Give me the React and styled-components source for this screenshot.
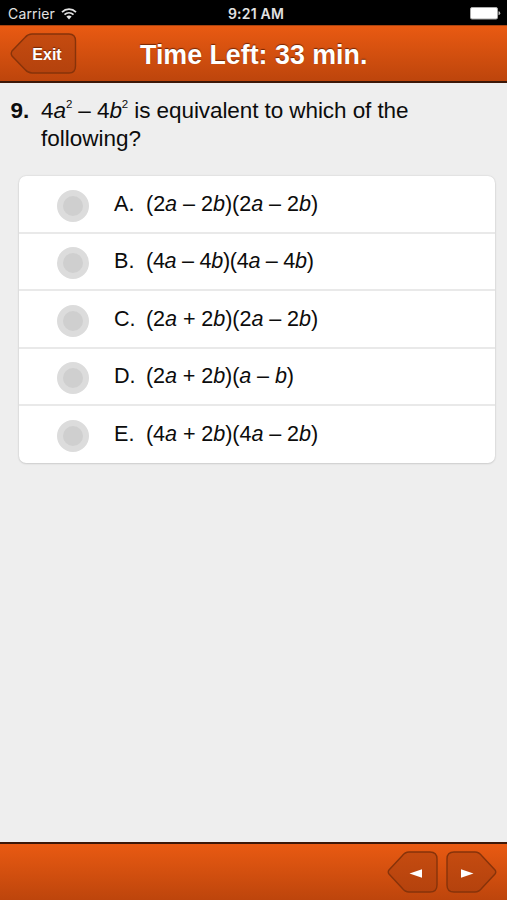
import React, { useState } from 'react';
import styled, { createGlobalStyle } from 'styled-components';

const answers = [
	{ letter: 'A.', terms: ['(2', 'a', ' – 2', 'b', ')(2', 'a', ' – 2', 'b', ')'], spacing: '-0.05px' },
	{ letter: 'B.', terms: ['(4', 'a', ' – 4', 'b', ')(4', 'a', ' – 4', 'b', ')'], spacing: '-0.3px' },
	{ letter: 'C.', terms: ['(2', 'a', ' + 2', 'b', ')(2', 'a', ' – 2', 'b', ')'], spacing: '-0.08px' },
	{ letter: 'D.', terms: ['(2', 'a', ' + 2', 'b', ')(', 'a', ' – ', 'b', ')'], spacing: '-0.1px' },
	{ letter: 'E.', terms: ['(4', 'a', ' + 2', 'b', ')(4', 'a', ' – 2', 'b', ')'], spacing: '-0.08px' },
];

// The terms alternate between upright text and italic variables
const Expression = ({ terms }) =>
	terms.map((term, index) =>
		index % 2 ? <i key={index}>{term}</i> : <span key={index}>{term}</span>
	);

const WifiIcon = () => (
	<svg width='16' height='12' viewBox='0 0 16 12'>
		<path d='M1 4.1C5 .2 11 .2 15 4.1' fill='none' stroke='#e2e2e2' strokeWidth='1.8' />
		<path d='M3.5 6.7C6.1 4.2 9.9 4.2 12.5 6.7' fill='none' stroke='#e2e2e2' strokeWidth='1.7' />
		<path d='M5.4 8.6Q8 6.4 10.6 8.6L8 11.4Z' fill='#e2e2e2' />
	</svg>
);

const BatteryIcon = () => (
	<svg width='31' height='13' viewBox='0 0 31 13'>
		<rect x='.5' y='.5' width='27' height='11.5' rx='1.5' fill='#fff' stroke='#aaa' />
		<path d='M28.5 4.3Q30.3 4.5 30.3 6.3Q30.3 8 28.5 8.3Z' fill='#bbb' />
	</svg>
);

const App = () => {
	const [selected, setSelected] = useState(null);

	return (
		<Screen>
			<GlobalStyle />
			<StatusBar>
				<Carrier>
					Carrier <WifiIcon />
				</Carrier>
				<Clock>9:21 AM</Clock>
				<Battery>
					<BatteryIcon />
				</Battery>
			</StatusBar>
			<Header>
				<ExitButton>
					<svg width='67' height='42' viewBox='0 0 67 42'>
						<defs>
							<linearGradient id='buttonShade' x1='0' y1='0' x2='0' y2='1'>
								<stop offset='0' stopColor='#c54b10' />
								<stop offset='1' stopColor='#b4420d' />
							</linearGradient>
						</defs>
						<path
							d='M22 1H59Q65.5 1 65.5 8V33Q65.5 40 59 40H22Q18 40 15 36.5L2 23Q.5 20.5 2 18L15 4.5Q18 1 22 1Z'
							fill='url(#buttonShade)'
							stroke='#87330a'
							strokeWidth='1.4'
						/>
					</svg>
					<ExitLabel>Exit</ExitLabel>
				</ExitButton>
				<Title>Time Left: 33 min.</Title>
			</Header>
			<Content>
				<Question>
					<QuestionNumber>9.</QuestionNumber>
					<QuestionText>
						4<i>a</i>
						<Power>2</Power> – 4<i>b</i>
						<Power>2</Power> is equivalent to which of the
						<br />
						<LastLine>following?</LastLine>
					</QuestionText>
				</Question>
				<AnswerList>
					{answers.map(({ letter, terms, spacing }) => (
						<Answer key={letter} onClick={() => setSelected(letter)}>
							<Radio $selected={selected === letter} />
							<Letter>{letter}</Letter>
							<Formula $spacing={spacing}>
								<Expression terms={terms} />
							</Formula>
						</Answer>
					))}
				</AnswerList>
			</Content>
			<Footer>
				<ArrowButton aria-label='Previous question'>
					<svg width='51' height='42' viewBox='0 0 51 42'>
						<path
							d='M22 1H43Q50 1 50 8V34Q50 41 43 41H22Q18 41 15 37L2 23Q.5 21 2 19L15 5Q18 1 22 1Z'
							fill='url(#buttonShade)'
							stroke='#87330a'
							strokeWidth='1.4'
						/>
						<path d='M22.5 22.5L35 18.2V26.8Z' fill='#fff' />
					</svg>
				</ArrowButton>
				<ArrowButton aria-label='Next question'>
					<svg width='51' height='42' viewBox='0 0 51 42'>
						<path
							d='M29 1H8Q1 1 1 8V34Q1 41 8 41H29Q33 41 36 37L49 23Q50.5 21 49 19L36 5Q33 1 29 1Z'
							fill='url(#buttonShade)'
							stroke='#87330a'
							strokeWidth='1.4'
						/>
						<path d='M27.5 22.5L15 18.2V26.8Z' fill='#fff' />
					</svg>
				</ArrowButton>
			</Footer>
		</Screen>
	);
};

const GlobalStyle = createGlobalStyle`
	* {
		box-sizing: border-box;
	}

	body {
		margin: 0;
	}

	button {
		padding: 0;
		border: 0;
		background: none;
		cursor: pointer;
	}

	svg {
		display: block;
	}
`;

const Screen = styled.div`
	display: flex;
	flex-direction: column;
	width: 507px;
	height: 900px;
	background: #eee;
	color: #0c0c0c;
	font-family: 'Liberation Sans', Arial, sans-serif;
`;

const StatusBar = styled.div`
	display: grid;
	grid-template-columns: 1fr auto 1fr;
	align-items: center;
	height: 25px;
	padding: 2px 6px 0 8px;
	background: #000;
	color: #e2e2e2;
	font-family: Inter, sans-serif;
	font-size: 14px;
`;

const Carrier = styled.div`
	display: flex;
	align-items: center;
	gap: 6px;
	letter-spacing: 0.15px;
`;

const Clock = styled.span`
	margin-left: 3px;
	font-weight: 600;
	letter-spacing: 0.2px;
`;

const Battery = styled.div`
	display: flex;
	justify-content: flex-end;
`;

const Header = styled.header`
	display: flex;
	align-items: center;
	height: 58px;
	padding-left: 10px;
	border-top: 1px solid #a8430f;
	border-bottom: 2px solid #3c1708;
	background: linear-gradient(#e95a12, #bd450c);
`;

const ExitButton = styled.button`
	display: grid;
	place-items: center;

	> * {
		grid-area: 1 / 1;
	}
`;

const ExitLabel = styled.span`
	padding: 2px 0 0 7px;
	color: #fff;
	font-family: 'Liberation Sans', Arial, sans-serif;
	font-size: 16px;
	font-weight: 700;
	text-shadow: 0 -1px 1px rgba(60, 15, 0, 0.6);
`;

const Title = styled.h1`
	margin: 3px 0 0 63px;
	color: #fff;
	font-size: 26.8px;
	line-height: 32px;
	white-space: nowrap;
	text-shadow: 0 -1px 1px rgba(60, 15, 0, 0.65);
`;

const Content = styled.main`
	flex: 1;
	padding: 14px 12px 0 10px;
`;

const Question = styled.div`
	display: flex;
	height: 79px;
	font-size: 22.5px;
	line-height: 28px;
`;

const QuestionNumber = styled.b`
	width: 31px;
	padding-left: 0.5px;
`;

const QuestionText = styled.div`
	letter-spacing: -0.08px;
	white-space: nowrap;
`;

const LastLine = styled.span`
	letter-spacing: 0;
`;

const Power = styled.sup`
	font-size: 11.5px;
	line-height: 0;
	vertical-align: 10px;
`;

const AnswerList = styled.div`
	margin-left: 9px;
	height: 287px;
	padding-top: 0.6px;
	border-radius: 7px;
	background: #fff;
	box-shadow: 0 0 2px rgba(0, 0, 0, 0.15), 0 1px 2px rgba(0, 0, 0, 0.1);
`;

const Answer = styled.div`
	display: flex;
	align-items: center;
	height: 57.45px;
	padding: 3px 0 0 38px;
	border-bottom: 2px solid #e9e9e9;
	font-size: 21.6px;
	cursor: pointer;

	&:last-child {
		height: 56px;
		border-bottom: 0;
	}
`;

const Radio = styled.span`
	width: 32px;
	height: 32px;
	margin-right: 25px;
	border: 6px solid #dcdcdc;
	border-radius: 50%;
	background: ${(props) => (props.$selected ? '#e05510' : '#cfcfcf')};
`;

const Letter = styled.span`
	width: 32px;
	margin-top: -4px;
`;

const Formula = styled.span`
	margin-top: -4px;
	letter-spacing: ${(props) => props.$spacing};
	white-space: pre;
`;

const Footer = styled.footer`
	display: flex;
	justify-content: flex-end;
	align-items: center;
	gap: 8px;
	height: 58px;
	padding-right: 10px;
	border-top: 2px solid #3c1708;
	background: linear-gradient(#e95a12, #bd450c);
`;

const ArrowButton = styled.button`
	display: block;
`;

export default App;
